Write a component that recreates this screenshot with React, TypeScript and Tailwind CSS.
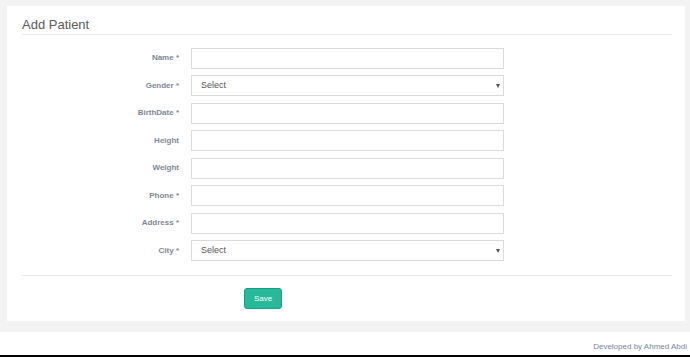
import React from "react";

const fields: { label: string; type: "input" | "select" }[] = [
  { label: "Name *", type: "input" },
  { label: "Gender *", type: "select" },
  { label: "BirthDate *", type: "input" },
  { label: "Height", type: "input" },
  { label: "Weight", type: "input" },
  { label: "Phone *", type: "input" },
  { label: "Address *", type: "input" },
  { label: "City *", type: "select" },
];

export default function App() {
  return (
    <div
      className="w-[690px] h-[357px] bg-[#f3f3f3] flex flex-col overflow-hidden"
      style={{ fontFamily: '"Liberation Sans", Arial, sans-serif' }}
    >
      <div className="pt-[6px] pl-[7px] pr-[5px]">
        <div className="h-[315px] bg-white pl-[15px] pr-[13px] flex flex-col">
          <div className="pt-[11px] pb-[2px] border-b border-[#e6e9ed]">
            <h2 className="text-[13px] leading-[15px] text-[#5a5a5a] font-normal">Add Patient</h2>
          </div>
          <div className="mt-[12.5px] flex flex-col gap-[6.5px]">
            {fields.map((f) => (
              <div key={f.label} className="flex items-center h-[21px]">
                <div className="w-[157px] text-right text-[8px] font-bold text-[#7d8793] leading-[10px]">
                  {f.label}
                </div>
                <div className="ml-[12px] w-[313px] h-[21px] relative">
                  {f.type === "input" ? (
                    <input
                      type="text"
                      className="block w-full h-full border border-[#dcdcdc] bg-white outline-none text-[9px] px-[9px]"
                    />
                  ) : (
                    <>
                      <select className="block appearance-none w-full h-full border border-[#dcdcdc] bg-white outline-none text-[9px] text-[#555] pl-[9px]">
                        <option>Select</option>
                      </select>
                      <span className="absolute right-[4px] top-[9px] w-0 h-0 border-l-[2.5px] border-r-[2.5px] border-t-[4px] border-l-transparent border-r-transparent border-t-[#555]" />
                    </>
                  )}
                </div>
              </div>
            ))}
          </div>
          <div className="mt-[14px] border-t border-[#e6e9ed]" />
          <div className="mt-[12px] pl-[222px]">
            <button className="block w-[38px] h-[21px] bg-[#26b99a] border border-[#169f85] rounded-[3px] text-white text-[8px] leading-[10px]">
              Save
            </button>
          </div>
        </div>
      </div>
      <div className="mt-[11px] h-[23px] bg-white pt-[10px] pr-[3px] text-right text-[8px] leading-[10px] text-[#73879c]">
        Developed by Ahmed Abdi
      </div>
      <div className="h-[2px] bg-black" />
    </div>
  );
}
